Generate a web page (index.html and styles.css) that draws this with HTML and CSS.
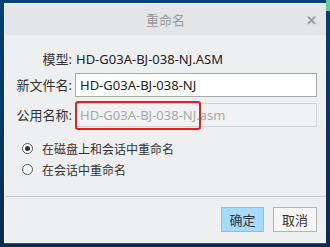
FILE: index.html
```html
<!DOCTYPE html>
<html>
<head>
<meta charset="utf-8">
<title>重命名</title>
<link rel="stylesheet" href="styles.css">
</head>
<body>

<div class="dialog">
	<div class="titlebar">
		<span class="title">重命名</span>
		<span class="close">✕</span>
	</div>
	<div class="content">
		<div class="form">
			<label class="lbl">模型:</label>
			<div class="value">HD-G03A-BJ-038-NJ.ASM</div>
			<label class="lbl">新文件名:</label>
			<div class="input">HD-G03A-BJ-038-NJ</div>
			<label class="lbl">公用名称:</label>
			<div class="input disabled">HD-G03A-BJ-038-NJ.asm
				<span class="mark"></span>
			</div>
		</div>
		<ul class="options">
			<li><span class="radio checked"></span>在磁盘上和会话中重命名</li>
			<li><span class="radio"></span>在会话中重命名</li>
		</ul>
	</div>
	<div class="footer">
		<button class="btn primary">确定</button>
		<button class="btn">取消</button>
	</div>
</div>

</body>
</html>
```
FILE: styles.css
```css
* {margin:0;padding:0;list-style:none;box-sizing:border-box;}

body {
	width:330px;height:247px;overflow:hidden;
	font-family:"Noto Sans","Noto Sans CJK SC",sans-serif;font-size:13px;color:#333;
	background:
		linear-gradient(#5fcf9f,#5fcf9f) right top / 4px 11px no-repeat,
		linear-gradient(#034178,#0a2b52);
	padding:3px 4px 0 4px;
}

.dialog {
	width:322px;height:240px;background:#eeeff1;
	border-top:1px solid #f7f8f9;border-left:1px solid #f7f8f9;
	box-shadow:0 1px 0 #3b4a5c;
	display:flex;flex-direction:column;
}

.titlebar {
	height:31px;background:#e4e5e7;position:relative;
	display:flex;align-items:center;justify-content:center;
}
.titlebar .title {color:#9a9a9a;font-size:13px;}
.titlebar .close {position:absolute;right:9px;top:7px;color:#9c9c9c;font-size:13px;font-weight:bold;}

.content {padding:13px 9px 0 0;flex:1;}

.form {
	display:grid;grid-template-columns:70px 1fr;
	grid-template-rows:22px 24px 27px;row-gap:3px;
}
.form > :nth-child(n+5) {margin-top:3px;}
.lbl {text-align:right;padding-right:3px;line-height:22px;color:#333;}
.form > .lbl:nth-child(n+3) {line-height:24px;}

.value {line-height:22px;padding-left:1px;color:#222;}
.input {
	height:24px;line-height:22px;padding-left:4px;
	border:1px solid #a9a9a9;background:#fff;color:#222;
	position:relative;
}
.input.disabled {border-color:#d2d3d5;background:#f1f2f4;color:#a9a9a9;}
.mark {
	position:absolute;left:-1px;top:-3px;width:126px;height:29px;
	border:2.5px solid #ec1c1c;border-radius:3px;
}

.options {margin-top:11px;padding-left:17px;}
.options li {display:flex;align-items:center;height:21px;color:#333;font-size:12px;}
.radio {
	width:11px;height:11px;border-radius:50%;border:1px solid #555;background:#fff;
	margin-right:9px;display:inline-flex;align-items:center;justify-content:center;
}
.radio.checked::after {content:"";width:5px;height:5px;border-radius:50%;background:#333;}

.footer {
	margin-left:1px;border-top:1px solid #c6c7c9;height:47px;
	display:flex;justify-content:flex-end;align-items:flex-start;gap:9px;padding:10px 9px 0 0;
}
.btn {
	width:44px;height:25px;font-family:inherit;font-size:13px;color:#333;
	background:#f7f7f7;border:1px solid #b3b3b3;
}
.btn.primary {background:#a5dbfe;border-color:#7ac4f4;width:43px;}
```
